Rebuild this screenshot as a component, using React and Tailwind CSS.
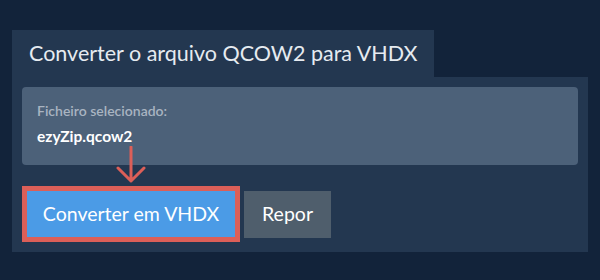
export default function App() {
  return (
    <div
      className="w-[600px] h-[280px] bg-[#12233a] pt-[30px] px-3"
      style={{ fontFamily: "Lato, 'Open Sans', sans-serif" }}
    >
      {/* Tab */}
      <div className="w-[422px] h-[47px] bg-[#233750] flex items-center pl-[17px]">
        <h1 className="text-[21.5px] leading-none text-[#e6ebf0] font-normal">Converter o arquivo QCOW2 para VHDX</h1>
      </div>

      {/* Panel */}
      <div className="bg-[#233750] p-[10px]">
        <div className="bg-[#4c6179] rounded-[4px] h-[78px] px-[15px] pt-[14px]">
          <p className="text-[14px] leading-[20px] font-semibold text-[#a9b4c1]">Ficheiro selecionado:</p>
          <p className="text-[15.5px] leading-[22px] font-bold text-white mt-[4px]">ezyZip.qcow2</p>
        </div>

        <div className="relative flex items-center gap-[4px] mt-[21px]">
          <svg className="absolute left-[94px] top-[-40px]" width="30" height="38" viewBox="0 0 30 38" fill="none">
            <path d="M15 1 V35 M2 22 L15 35 L28 22" stroke="#dc5f58" strokeWidth="3" strokeLinecap="round" strokeLinejoin="round" />
          </svg>
          <div className="border-[5px] border-[#dc5f58]">
            <button className="h-[46px] w-[208px] bg-[#4b9be6] text-white text-[19.5px] flex items-center justify-center">
              Converter em VHDX
            </button>
          </div>
          <button className="h-[47px] w-[87px] bg-[#4f5e6c] text-white text-[19.5px] flex items-center justify-center">
            Repor
          </button>
        </div>
      </div>
    </div>
  );
}
